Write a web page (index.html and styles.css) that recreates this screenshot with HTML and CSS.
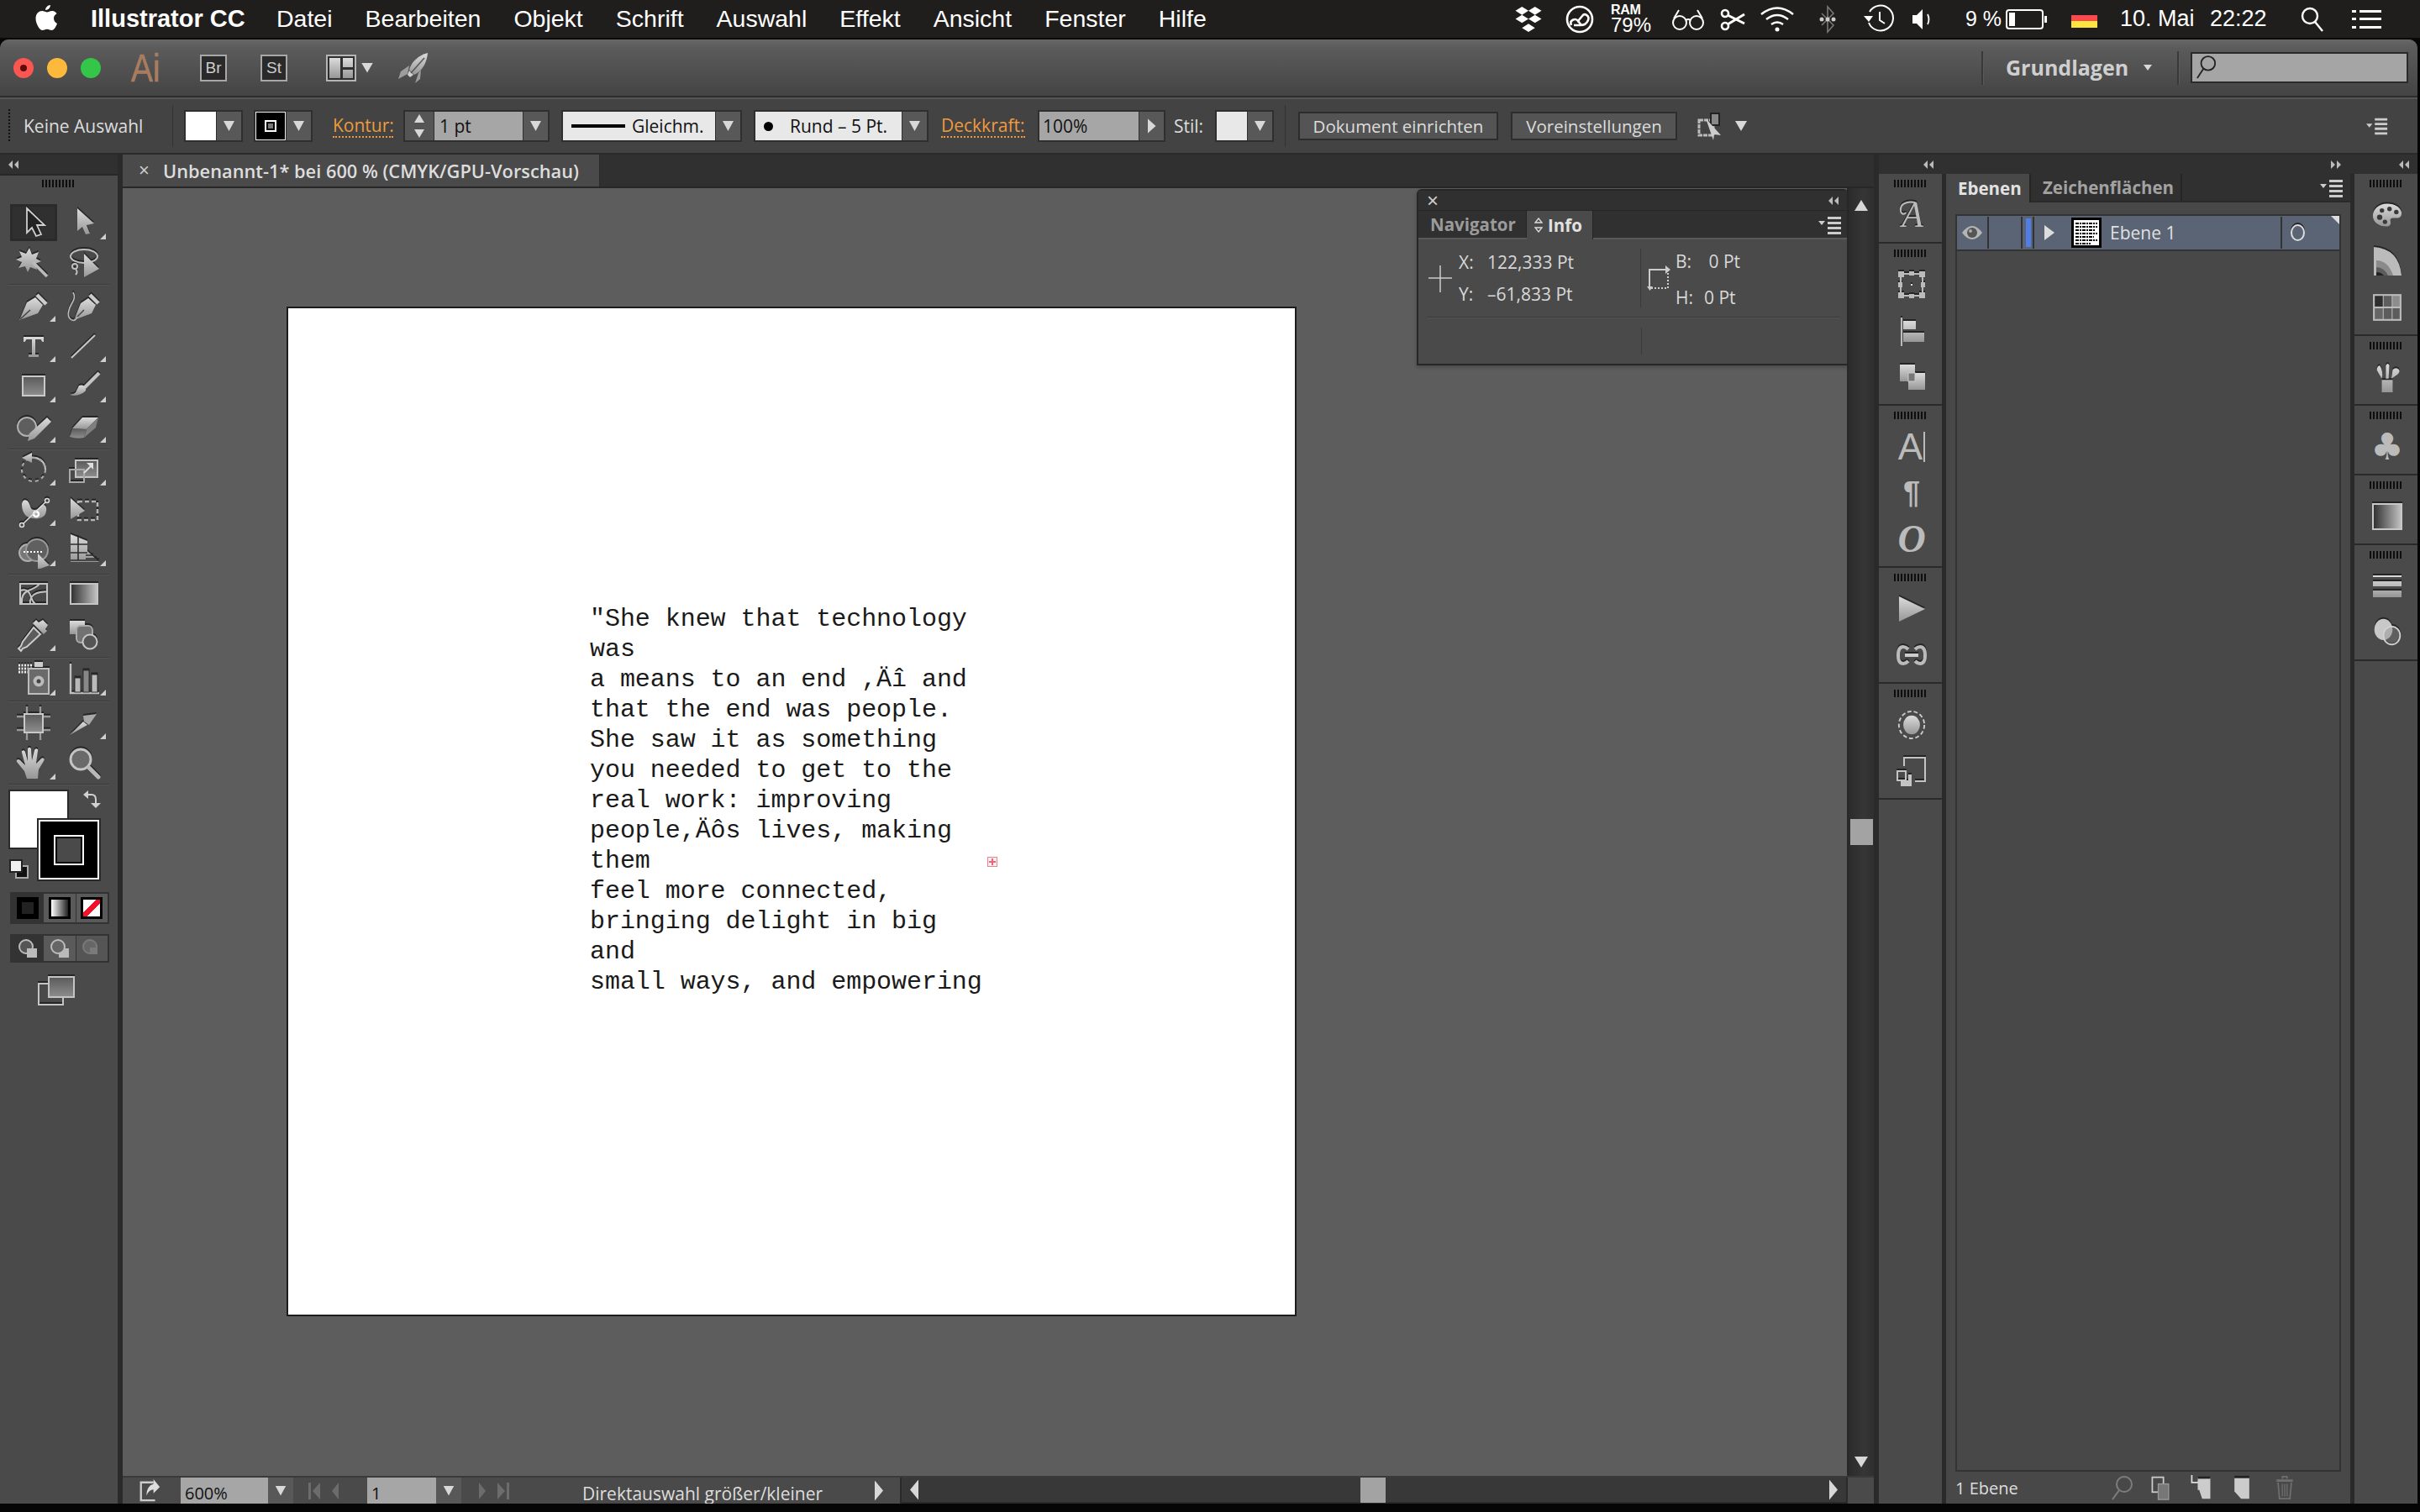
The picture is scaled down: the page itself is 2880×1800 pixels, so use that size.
FILE: index.html
```html
<!DOCTYPE html>
<html lang="de">
<head>
<meta charset="utf-8">
<title>Illustrator CC</title>
<link rel="stylesheet" href="styles.css">
</head>
<body>
<svg class="defs" width="0" height="0" aria-hidden="true">
  <defs>
    <linearGradient id="lg" x1="0" y1="0" x2="0" y2="1"><stop offset="0" stop-color="#dcdcdc"/><stop offset="1" stop-color="#969696"/></linearGradient>
    <linearGradient id="mg" x1="0" y1="0" x2="0" y2="1"><stop offset="0" stop-color="#5a5a5a"/><stop offset="1" stop-color="#8e8e8e"/></linearGradient>
    <linearGradient id="hg" x1="0" y1="0" x2="1" y2="0"><stop offset="0" stop-color="#2e2e2e"/><stop offset="1" stop-color="#c4c4c4"/></linearGradient>
    <linearGradient id="wb" x1="0" y1="0" x2="1" y2="0"><stop offset="0" stop-color="#fff"/><stop offset="1" stop-color="#333"/></linearGradient>
  </defs>
</svg>

<header class="menubar">
  <svg class="apple" viewBox="0 0 28 32"><path fill="#fff" d="M19 1c0 3-2.600 6-6 6 0-3 3-6 6-6zM23 17c0-4 3-5 3.500-6-1.700-2.500-4.500-3-5.500-3-2.500 0-4.500 1.500-6 1.500S11.500 8 9 8C5.500 8 1.500 11 1.500 17c0 6 4.500 14 8 14 1.800 0 3-1.300 5.500-1.300S18.500 31 20.500 31c3 0 5.500-5 6.500-8-2-1-4-3-4-6z"/></svg>
  <strong class="appname">Illustrator CC</strong>
  <nav class="menus">
    <span>Datei</span><span>Bearbeiten</span><span>Objekt</span><span>Schrift</span><span>Auswahl</span><span>Effekt</span><span>Ansicht</span><span>Fenster</span><span>Hilfe</span>
  </nav>
  <div class="status-items">
    <svg class="st-drop" viewBox="0 0 32 32"><path fill="#fff" d="M8 1l8 5-8 5-8-5zM24 1l8 5-8 5-8-5zM8 11l8 5-8 5-8-5zM24 11l8 5-8 5-8-5zM16 22l8 5-8 5-8-5z"/></svg>
    <svg class="st-cc" viewBox="0 0 34 34" fill="none" stroke="#fff" stroke-width="2.600"><circle cx="17" cy="17" r="15"/><path d="M7 24c-3-6 5-9 8-5l5-6c3-4 9 0 7 5s-6 6-9 6H10"/><path d="M15 19l4 5"/></svg>
    <div class="st-ram"><b>RAM</b><span>79%</span></div>
    <svg class="st-glass" viewBox="0 0 40 30" fill="none" stroke="#fff" stroke-width="2"><circle cx="10" cy="19" r="8"/><circle cx="30" cy="19" r="8"/><path d="M17 16q3-2 6 0M3 14L9 4M37 14L31 4"/></svg>
    <svg class="st-sci" viewBox="0 0 30 30" fill="none" stroke="#fff" stroke-width="2.600"><circle cx="6" cy="8" r="4"/><circle cx="6" cy="23" r="4"/><path d="M9 10l20 10M9 21L29 9" stroke-width="3"/></svg>
    <svg class="st-wifi" viewBox="0 0 42 32" fill="none" stroke="#fff" stroke-width="2.600"><path d="M2 10q19-15 38 0M8 16q13-10 26 0M14 22q7-5 14 0"/><circle cx="21" cy="28" r="2.500" fill="#fff" stroke="none"/></svg>
    <svg class="st-bt" viewBox="0 0 20 34" fill="none" stroke="#777" stroke-width="1.600"><path d="M3 10l14 14-7 8V2l7 8L3 24"/><circle cx="3" cy="17" r="2.500" fill="#ccc" stroke="none"/><circle cx="10" cy="17" r="2.500" fill="#ccc" stroke="none"/><circle cx="17" cy="17" r="2.500" fill="#ccc" stroke="none"/></svg>
    <svg class="st-tm" viewBox="0 0 36 36" fill="none" stroke="#fff" stroke-width="2"><path d="M7 9a15 15 0 1 1-1 13"/><path d="M19 9v10l6 4"/><path d="M0 14h11l-5 7z" fill="#fff" stroke="none"/></svg>
    <svg class="st-vol" viewBox="0 0 26 26"><path fill="#fff" d="M1 8h5l7-7v24l-7-7H1z"/><path fill="none" stroke="#fff" stroke-width="1.800" d="M19 7q3 6 0 12"/></svg>
    <span class="st-pct">9 %</span>
    <div class="st-batt"><i></i></div>
    <div class="st-flag"></div>
    <span class="st-date">10. Mai</span>
    <span class="st-time">22:22</span>
    <svg class="st-search" viewBox="0 0 28 30" fill="none" stroke="#fff" stroke-width="2.400"><circle cx="11" cy="11" r="9"/><path d="M17 18l9 11"/></svg>
    <svg class="st-list" viewBox="0 0 35 24" fill="#fff"><path d="M0 1h5v3H0zM9 1h26v3H9zM0 10h5v3H0zM9 10h26v3H9zM0 20h5v3H0zM9 20h26v3H9z"/></svg>
  </div>
</header>

<div class="window">
  <div class="titlebar">
    <span class="light red"><i></i></span><span class="light orange"></span><span class="light green"></span>
    <span class="ai">Ai</span>
    <span class="bridge">Br</span>
    <span class="bridge stock">St</span>
    <svg class="layout" viewBox="0 0 36 32"><rect x="1" y="1" width="34" height="30" fill="#2f2f2f" stroke="#b5b5b5" stroke-width="2"/><path fill="url(#lg)" d="M4 4h13v24H4zM20 4h12v11H20zM20 18h12v10H20z"/></svg>
    <span class="tri-d layout-arrow"></span>
    <svg class="rocket" viewBox="0 0 36 36"><path fill="url(#lg)" d="M35 0C24 3 16 10 13 20l6 6C28 22 34 12 35 0z"/><path fill="#9d9d9d" d="M13 15L3 22 0 31l11-6zM24 24l-4 12 6-5 1-11z"/><path fill="#cfcfcf" d="M13 21l5 5-4 3-3-3z"/><path fill="none" stroke="#555" stroke-width="1.500" d="M31 6L15 24"/></svg>
    <span class="vsep vs-a"></span>
    <span class="workspace">Grundlagen</span>
    <span class="tri-d ws-arrow"></span>
    <span class="vsep vs-b"></span>
    <div class="searchbox"><svg viewBox="0 0 26 32" fill="none" stroke="#222" stroke-width="2"><circle cx="15" cy="11" r="9"/><path d="M9 18L1 30"/></svg></div>
  </div>

  <div class="controlbar">
    <span class="cgrip"></span>
    <span class="cb-none">Keine Auswahl</span>
    <span class="cb-sep cs-a"></span>
    <div class="ctl c-fill"><span class="swatch white"></span><span class="dd"><i class="tri-d"></i></span></div>
    <div class="ctl c-stroke"><span class="swatch stroke"><i></i></span><span class="dd"><i class="tri-d"></i></span></div>
    <span class="link c-kontur">Kontur:</span>
    <div class="ctl c-weight"><span class="spin"><i class="tri-u"></i><i class="tri-d"></i></span><span class="field f-weight">1 pt</span><span class="dd"><i class="tri-d"></i></span></div>
    <div class="ctl c-profile"><span class="pick p-line"><i class="line"></i>Gleichm.</span><span class="dd"><i class="tri-d"></i></span></div>
    <div class="ctl c-brush"><span class="pick p-brush"><i class="dot"></i>Rund – 5 Pt.</span><span class="dd"><i class="tri-d"></i></span></div>
    <span class="link c-deck">Deckkraft:</span>
    <div class="ctl c-opac"><span class="field f-opac">100%</span><span class="dd"><i class="tri-r"></i></span></div>
    <span class="cb-stil">Stil:</span>
    <div class="ctl c-style"><span class="swatch pale"></span><span class="dd"><i class="tri-d"></i></span></div>
    <span class="cb-sep cs-b"></span>
    <button class="btn b-doc">Dokument einrichten</button>
    <button class="btn b-pref">Voreinstellungen</button>
    <svg class="cb-ico" viewBox="0 0 32 34"><rect x="2" y="10" width="17" height="18" fill="none" stroke="#bbb" stroke-width="3" stroke-dasharray="5 1"/><rect x="16" y="2" width="10" height="14" fill="#888" stroke="#222" stroke-width="2"/><path fill="#ccc" d="M10 8l18 20-8-1-1 7z"/></svg>
    <span class="tri-d cb-arrow"></span>
    <svg class="menu-ico cb-menu" viewBox="0 0 28 22"><path fill="#ccc" d="M0 8h8l-4 5zM11 1h16v3H11zM11 7h16v3H11zM11 13h16v3H11zM11 19h16v3H11z"/></svg>
  </div>

  <div class="work">
    <aside class="toolbar">
      <div class="strip"><svg class="coll" viewBox="0 0 14 12"><path fill="#bbb" d="M6 1v10L1 6zM13 1v10L8 6z"/></svg></div>
      <div class="grip tgrip"></div>
      <div class="tg g1">
        <div class="tool active"><svg class="ico" viewBox="0 0 44 44"><path fill="#222" stroke="#d0d0d0" stroke-width="1.800" d="M14 4L35 24H26L31 35 25 37 20 27 14 33Z"/></svg></div>
        <div class="tool more"><svg class="ico" viewBox="0 0 44 44"><path fill="url(#lg)" d="M14 4L34 22 25 24 29 34 24 35 20 26 14 31Z"/></svg></div>
        <div class="tool"><svg class="ico" viewBox="0 0 44 44"><path fill="url(#lg)" d="M17 3l3 8 8-3-3 8 6 3-7 3 2 7-8-3-3 6-3-7-8 2 4-7-7-3 7-3-3-7 8 3z"/><path stroke="#bbb" stroke-width="3.500" d="M21 20L38 37"/></svg></div>
        <div class="tool"><svg class="ico" viewBox="0 0 44 44"><ellipse cx="22" cy="13" rx="16" ry="8" fill="none" stroke="#c0c0c0" stroke-width="2"/><circle cx="11" cy="25" r="3" fill="none" stroke="#c0c0c0" stroke-width="2"/><path fill="none" stroke="#c0c0c0" stroke-width="2" d="M12 28q3 4 0 7"/><path fill="url(#lg)" d="M22 10l18 18-18 10z"/></svg></div>
      </div>
      <div class="tg g2">
        <div class="tool more"><svg class="ico" viewBox="0 0 44 44"><path fill="url(#lg)" d="M5 39l9-21 10-6 9 9-6 10z"/><path stroke="#444" stroke-width="1.500" d="M6 38l12-11"/><path stroke="#ccc" stroke-width="4.500" d="M26 9l11 11"/></svg></div>
        <div class="tool"><svg class="ico" viewBox="0 0 44 44"><path fill="url(#lg)" d="M10 39l8-20 9-6 9 8-5 10z"/><path stroke="#444" stroke-width="1.500" d="M11 38l11-11"/><path stroke="#ccc" stroke-width="4.500" d="M29 9l10 10"/><path fill="none" stroke="#bbb" stroke-width="1.600" d="M9 6c3 5 1 9-2 14s-6 14-1 18 7-1 8-3"/></svg></div>
        <div class="tool more"><svg class="ico" viewBox="0 0 44 44"><path fill="url(#lg)" d="M10 17v-6h24v6h-1.500l-2-3H24v18h4v3H16v-3h4V14h-6.500l-2 3z"/></svg></div>
        <div class="tool more"><svg class="ico" viewBox="0 0 44 44"><path stroke="#c8c8c8" stroke-width="2" d="M7 36L35 9"/></svg></div>
        <div class="tool more"><svg class="ico" viewBox="0 0 44 44"><rect x="9" y="10" width="26" height="23" fill="url(#mg)" stroke="#cacaca" stroke-width="2"/></svg></div>
        <div class="tool more"><svg class="ico" viewBox="0 0 44 44"><path stroke="#c4c4c4" stroke-width="4" d="M40 6L22 24"/><path fill="url(#lg)" d="M16 21c5-2 9 2 8 6-4 5-14 7-19 5 5-1 7-2 8-5z"/></svg></div>
        <div class="tool more"><svg class="ico" viewBox="0 0 44 44"><circle cx="14" cy="22" r="11" fill="#5e5e5e" stroke="#b0b0b0" stroke-width="2"/><path fill="url(#lg)" d="M38 11l5 5-20 20-8 3 2-9z"/></svg></div>
        <div class="tool more"><svg class="ico" viewBox="0 0 44 44"><path fill="url(#mg)" d="M5 34l3-10 17 1-3 10q-9 2-17-1z"/><path fill="url(#lg)" d="M8 24L20 11h19L25 25z"/><path fill="#7f7f7f" d="M25 25l14-14-3 12-14 12z"/></svg></div>
      </div>
      <div class="tg g3">
        <div class="tool more"><svg class="ico" viewBox="0 0 44 44"><path fill="none" stroke="#c0c0c0" stroke-width="2.200" d="M17 8c10-2 19 4 19 14"/><circle cx="22" cy="22" r="14" fill="none" stroke="#a8a8a8" stroke-width="2.200" stroke-dasharray="4 4"/><path fill="url(#lg)" d="M20 2v12L8 8z"/></svg></div>
        <div class="tool more"><svg class="ico" viewBox="0 0 44 44"><rect x="12" y="11" width="26" height="20" fill="url(#mg)" stroke="#c4c4c4" stroke-width="2"/><rect x="5" y="22" width="17" height="15" fill="none" stroke="#a8a8a8" stroke-width="2"/><path stroke="#ddd" stroke-width="2" d="M22 26l9-9"/><path fill="#ddd" d="M33 14v8l-8-8z"/></svg></div>
        <div class="tool more"><svg class="ico" viewBox="0 0 44 44"><path fill="url(#lg)" d="M8 16c0-7 6-7 8-3 3 5 2 9 7 9 6 0 6-5 10-6 5 0 5 6 3 11-4 7-14 6-20 4-4-2-8-7-8-15z"/><circle cx="25" cy="27" r="3" fill="none" stroke="#fff" stroke-width="2.500"/><path stroke="#ddd" stroke-width="1.500" d="M10 38l27-26"/><circle cx="38" cy="11" r="2.500" fill="#444" stroke="#ddd" stroke-width="1.500"/><circle cx="8" cy="40" r="2.500" fill="#444" stroke="#ddd" stroke-width="1.500"/></svg></div>
        <div class="tool"><svg class="ico" viewBox="0 0 44 44"><rect x="15" y="12" width="23" height="22" fill="none" stroke="#b5b5b5" stroke-width="2.500" stroke-dasharray="5 3"/><path fill="url(#lg)" d="M6 8l17 15-17 10z"/></svg></div>
        <div class="tool more"><svg class="ico" viewBox="0 0 44 44"><circle cx="15" cy="25" r="10" fill="#777" stroke="#b0b0b0" stroke-width="2"/><circle cx="26" cy="22" r="13" fill="#606060" stroke="#9a9a9a" stroke-width="2"/><path stroke="#fff" stroke-width="2" stroke-dasharray="2 2" d="M10 24h22"/><path fill="url(#lg)" d="M27 26l14 14-14 5z"/></svg></div>
        <div class="tool more"><svg class="ico" viewBox="0 0 44 44"><path fill="url(#lg)" d="M6 3l20 8v12l14 13H6z"/><path stroke="#2e2e2e" stroke-width="1.600" fill="none" d="M6 15h20M6 25h20M15 6v28M24 28h9M24 32h13M6 34h34"/></svg></div>
      </div>
      <div class="tg g4">
        <div class="tool"><svg class="ico" viewBox="0 0 44 44"><rect x="6" y="9" width="32" height="24" fill="none" stroke="#c4c4c4" stroke-width="2"/><path fill="none" stroke="#c4c4c4" stroke-width="2" d="M8 32c-1-8 3-13 8-15s11-5 13-8M18 33c-1-6 2-11 8-13s11-1 12-2M6 17c6-2 10 0 12 5s2 8 6 11"/></svg></div>
        <div class="tool"><svg class="ico" viewBox="0 0 44 44"><rect x="6" y="9" width="32" height="24" fill="url(#hg)" stroke="#c4c4c4" stroke-width="2"/></svg></div>
        <div class="tool more"><svg class="ico" viewBox="0 0 44 44"><path fill="url(#lg)" d="M28 7l5-3 6 6-3 5 2 2-4 4-13-13 4-4z"/><path fill="#5c5c5c" stroke="#ccc" stroke-width="2" d="M22 13l8 8-16 15-5 2-2 3-3-3 3-3 2-5z"/></svg></div>
        <div class="tool"><svg class="ico" viewBox="0 0 44 44"><rect x="5" y="5" width="18" height="16" fill="url(#lg)"/><rect x="13" y="11" width="19" height="20" rx="5" fill="#727272" stroke="#aaa" stroke-width="2"/><circle cx="29" cy="30" r="8.500" fill="#555" stroke="#c8c8c8" stroke-width="2"/></svg></div>
      </div>
      <div class="tg g5">
        <div class="tool more"><svg class="ico" viewBox="0 0 44 44"><path fill="none" stroke="#eee" stroke-width="3" stroke-dasharray="2 1.500" d="M4 5h16M4 9h16M4 13h16"/><rect x="23" y="1" width="10" height="6" fill="#ccc"/><rect x="16" y="9" width="24" height="30" fill="#6a6a6a" stroke="#bdbdbd" stroke-width="2"/><circle cx="28" cy="24" r="6.500" fill="#bbb"/><circle cx="28" cy="24" r="2.500" fill="#444"/></svg></div>
        <div class="tool more"><svg class="ico" viewBox="0 0 44 44"><path fill="none" stroke="#c0c0c0" stroke-width="2.400" d="M6 3v35h34"/><rect x="11" y="20" width="7" height="17" fill="#b8b8b8" stroke="#333"/><rect x="21" y="11" width="7" height="26" fill="#888" stroke="#333"/><rect x="31" y="16" width="7" height="21" fill="#bbb" stroke="#333"/></svg></div>
      </div>
      <div class="tg g6">
        <div class="tool"><svg class="ico" viewBox="0 0 44 44"><path stroke="#9a9a9a" stroke-width="2.400" d="M2 14h12M30 14h12M2 30h12M30 30h12M14 2v8M30 2v8M14 34v8M30 34v8"/><rect x="11" y="11" width="22" height="22" fill="url(#mg)" stroke="#c8c8c8" stroke-width="2"/></svg></div>
        <div class="tool more"><svg class="ico" viewBox="0 0 44 44"><path fill="url(#lg)" d="M5 36l16-16 5 4z"/><path fill="#a8a8a8" d="M21 13l16-2-9 13-6-4z"/></svg></div>
        <div class="tool more"><svg class="ico" viewBox="0 0 44 44"><path fill="url(#lg)" d="M14 40l-3-9-9-11c-1-3 2-4 4-2l6 6-4-15c-1-3 3-4 4-1l3 11V5c0-3 4-3 4 0l1 13 3-12c1-3 5-2 4 1l-2 15 6-6c2-2 5 0 3 3l-6 10-1 11z"/></svg></div>
        <div class="tool"><svg class="ico" viewBox="0 0 44 44"><circle cx="18" cy="17" r="12" fill="#6a6a6a" stroke="#c4c4c4" stroke-width="3"/><path stroke="#b8b8b8" stroke-width="5" stroke-linecap="round" d="M28 27l11 11"/></svg></div>
      </div>
      <div class="colors">
        <div class="fillbox"></div>
        <div class="strokebox"><i></i></div>
        <svg class="swap" viewBox="0 0 22 24"><path fill="none" stroke="#d0d0d0" stroke-width="2" d="M5 6h6q5 0 5 6v5"/><path fill="#d0d0d0" d="M7 1v10L1 6zM10 16h12l-6 6z"/></svg>
        <div class="defaultbox"><i></i><b></b></div>
      </div>
      <div class="modes colormodes">
        <span class="mode on"><i class="cm-solid"></i></span>
        <span class="mode"><i class="cm-grad"></i></span>
        <span class="mode"><i class="cm-none"></i></span>
      </div>
      <div class="modes drawmodes">
        <span class="mode on"><svg viewBox="0 0 24 24"><circle cx="10" cy="10" r="8" fill="#555" stroke="#bbb" stroke-width="2"/><rect x="11" y="12" width="12" height="11" fill="#bbb"/></svg></span>
        <span class="mode"><svg viewBox="0 0 24 24"><rect x="11" y="12" width="12" height="11" fill="#bbb"/><circle cx="10" cy="10" r="8" fill="#666" stroke="#bbb" stroke-width="2"/></svg></span>
        <span class="mode dim"><svg viewBox="0 0 24 24"><circle cx="10" cy="10" r="8" fill="#666" stroke="#7a7a7a" stroke-width="2"/><rect x="10" y="11" width="9" height="8" fill="#7a7a7a"/></svg></span>
      </div>
      <svg class="screenmode ico" viewBox="0 0 44 36"><rect x="1" y="10" width="29" height="25" fill="none" stroke="#c4c4c4" stroke-width="2"/><rect x="13" y="2" width="30" height="24" fill="url(#mg)" stroke="#c4c4c4" stroke-width="2"/></svg>
    </aside>

    <main class="doc">
      <div class="tabs">
        <div class="tab"><span class="tab-x">×</span><span class="tab-name">Unbenannt-1* bei 600 % (CMYK/GPU-Vorschau)</span></div>
      </div>
      <div class="stage">
        <div class="canvas">
          <div class="artboard">
            <pre class="copy">"She knew that technology
was
a means to an end ,Äî and
that the end was people.
She saw it as something
you needed to get to the
real work: improving
people,Äôs lives, making
them
feel more connected,
bringing delight in big
and
small ways, and empowering</pre>
            <span class="overflow"></span>
          </div>

          <section class="infopanel">
            <div class="ip-head"><span class="ip-x">×</span><svg class="coll" viewBox="0 0 14 12"><path fill="#bbb" d="M6 1v10L1 6zM13 1v10L8 6z"/></svg></div>
            <div class="ip-tabs">
              <span class="ip-tab">Navigator</span>
              <span class="ip-tab on"><svg viewBox="0 0 10 18"><path fill="none" stroke="#ddd" stroke-width="1.300" d="M5 1l4 5H1zM5 17l4-5H1z"/></svg>Info</span>
              <svg class="menu-ico ip-menu" viewBox="0 0 28 22"><path fill="#ccc" d="M0 6h8l-4 5zM11 1h16v3H11zM11 7h16v3H11zM11 13h16v3H11zM11 19h16v3H11z"/></svg>
            </div>
            <div class="ip-body">
              <div class="ip-row">
                <div class="ip-cell ip-left">
                  <svg class="ip-cross" viewBox="0 0 28 34"><path stroke="#ccc" stroke-width="1.500" d="M0 17h28M14 2v32"/></svg>
                  <div class="ip-vals"><p><span class="k">X:</span>122,333 Pt</p><p><span class="k">Y:</span>–61,833 Pt</p></div>
                </div>
                <div class="ip-cell ip-right">
                  <svg class="ip-box" viewBox="0 0 28 32"><path fill="none" stroke="#ccc" stroke-width="2" d="M3 26V6h22"/><path fill="none" stroke="#ccc" stroke-width="2" stroke-dasharray="2 2" d="M25 6v22H3"/><path fill="#ccc" d="M22 1l6 5-6 5zM0 26h7l-3.500 5z"/></svg>
                  <div class="ip-vals wide"><p><span class="k">B:</span>&nbsp;0 Pt</p><p><span class="k">H:</span>0 Pt</p></div>
                </div>
              </div>
              <div class="ip-hr"></div>
              <div class="ip-row2"><span></span></div>
            </div>
          </section>
        </div>
        <div class="vscroll">
          <i class="tri-u sc-up"></i>
          <span class="thumb"></span>
          <i class="tri-d sc-dn"></i>
        </div>
      </div>
      <div class="statusbar">
        <div class="sb-left">
          <svg class="sb-share" viewBox="0 0 26 30"><path fill="none" stroke="#ccc" stroke-width="2.500" d="M18 4H2v23h18"/><path fill="#ddd" d="M18 0l8 10-8 8v-5q-6 0-9 8 0-12 9-15z"/></svg>
          <span class="field sb-zoom">600%</span><span class="dd sb-dd"><i class="tri-d"></i></span>
          <span class="sb-nav"><svg viewBox="0 0 16 24"><path fill="#6c6c6c" d="M1 2h3v20H1zM15 2v20L6 12z"/></svg><svg viewBox="0 0 10 24"><path fill="#6c6c6c" d="M9 2v20L1 12z"/></svg></span>
          <span class="field sb-page">1</span><span class="dd sb-dd"><i class="tri-d"></i></span>
          <span class="sb-nav sb-nav2"><svg viewBox="0 0 10 24"><path fill="#6c6c6c" d="M1 2v20l8-10z"/></svg><svg viewBox="0 0 16 24"><path fill="#6c6c6c" d="M1 2v20l9-10zM12 2h3v20h-3z"/></svg></span>
          <span class="sb-text">Direktauswahl größer/kleiner</span>
          <i class="tri-r sb-more"></i>
        </div>
        <div class="hscroll"><i class="tri-l"></i><span class="hthumb"></span><i class="tri-r"></i></div>
        <div class="sb-corner"></div>
      </div>
    </main>

    <div class="docks">
      <div class="docks-strip">
        <svg class="coll cl-a" viewBox="0 0 14 12"><path fill="#bbb" d="M6 1v10L1 6zM13 1v10L8 6z"/></svg>
        <svg class="coll cl-b" viewBox="0 0 14 12"><path fill="#bbb" d="M1 1v10l5-5zM8 1v10l5-5z"/></svg>
        <svg class="coll cl-c" viewBox="0 0 14 12"><path fill="#bbb" d="M6 1v10L1 6zM13 1v10L8 6z"/></svg>
      </div>
      <div class="docks-body">
        <div class="dock">
          <div class="dgroup"><div class="grip"></div><div class="dicon"><svg class="ico" viewBox="0 0 36 36"><text x="19" y="32" text-anchor="middle" class="script-a">A</text><path fill="none" stroke="#bbb" stroke-width="2" d="M24 4C16 1 6 3 5 10s4 8 6 5"/></svg></div></div>
          <div class="dgroup">
            <div class="grip"></div>
            <div class="dicon"><svg class="ico" viewBox="0 0 36 36"><rect x="5" y="5" width="26" height="26" fill="none" stroke="#bbb" stroke-width="2"/><path fill="#bbb" d="M2 2h7v7H2zM15 2h6v5h-6zM27 2h7v7h-7zM2 15h5v6H2zM29 15h5v6h-5zM2 27h7v7H2zM15 29h6v5h-6zM27 27h7v7h-7z"/><rect x="17" y="17" width="2" height="2" fill="#ddd"/></svg></div>
            <div class="dicon"><svg class="ico" viewBox="0 0 36 36"><path fill="#bbb" d="M5 2h2v34H5z"/><path fill="url(#lg)" d="M8 6h15v10H8zM8 20h25v11H8z"/></svg></div>
            <div class="dicon"><svg class="ico" viewBox="0 0 36 36"><path fill="url(#lg)" d="M4 3h18v20H4z"/><path fill="url(#lg)" d="M14 13h20v20H14z"/><rect x="14" y="13" width="8" height="10" fill="#777" stroke="#ccc"/></svg></div>
          </div>
          <div class="dgroup">
            <div class="grip"></div>
            <div class="dicon"><span class="gly g-a">A</span></div>
            <div class="dicon"><span class="gly g-p">¶</span></div>
            <div class="dicon"><span class="gly g-o">O</span></div>
          </div>
          <div class="dgroup">
            <div class="grip"></div>
            <div class="dicon"><svg class="ico" viewBox="0 0 36 36"><path fill="url(#lg)" d="M3 3l31 15L3 33z"/></svg></div>
            <div class="dicon"><svg class="ico" viewBox="0 0 36 36"><path fill="none" stroke="#bbb" stroke-width="4" d="M14 11q-3-3-6-3-6 0-6 10t6 10q3 0 6-3M22 11q3-3 6-3 6 0 6 10t-6 10q-3 0-6-3"/><rect x="10" y="16" width="16" height="4" fill="#ccc"/></svg></div>
          </div>
          <div class="dgroup">
            <div class="grip"></div>
            <div class="dicon"><svg viewBox="0 0 36 38"><ellipse cx="18" cy="19" rx="16" ry="17" fill="none" stroke="#ccc" stroke-width="2" stroke-dasharray="5 3"/><ellipse cx="18" cy="19" rx="10.500" ry="12" fill="url(#lg)"/></svg></div>
            <div class="dicon"><svg class="ico" viewBox="0 0 36 36"><path fill="none" stroke="#c4c4c4" stroke-width="2" d="M9 12V2h25v28H22"/><rect x="1" y="18" width="10" height="11" fill="none" stroke="#c4c4c4" stroke-width="2"/><path fill="#c4c4c4" d="M5 29h9v-7h4v14H5z"/></svg></div>
          </div>
          <div class="dfill"></div>
        </div>

        <section class="layers">
          <div class="l-tabs">
            <span class="l-tab on">Ebenen</span>
            <span class="l-tab">Zeichenflächen</span>
            <svg class="menu-ico l-menu" viewBox="0 0 28 22"><path fill="#ccc" d="M0 6h8l-4 5zM11 1h16v3H11zM11 7h16v3H11zM11 13h16v3H11zM11 19h16v3H11z"/></svg>
          </div>
          <div class="l-list">
            <div class="l-row">
              <span class="l-eye"><svg viewBox="0 0 26 20"><path fill="#b5b5b5" d="M1 10q12-16 24 0-12 16-24 0z"/><circle cx="13" cy="10" r="6" fill="#555"/><circle cx="11" cy="8" r="2" fill="#aaa"/></svg></span>
              <span class="l-lock"></span>
              <span class="l-color"><i></i></span>
              <i class="tri-r l-exp"></i>
              <svg class="l-thumb" viewBox="0 0 36 36"><rect width="36" height="36" fill="#000"/><rect x="3" y="3" width="30" height="30" fill="#fff"/><path fill="none" stroke="#000" stroke-width="2" stroke-dasharray="4 1 2 1" d="M5 7h26M5 11h26M5 15h24M5 19h26M5 23h22M5 27h26M5 31h18"/></svg>
              <span class="l-name">Ebene 1</span>
              <span class="l-target"><i></i></span>
              <span class="l-corner"></span>
            </div>
          </div>
          <div class="l-foot">
            <span class="l-count">1 Ebene</span>
            <div class="l-actions">
              <svg class="lf-a" viewBox="0 0 26 30" fill="none" stroke="#7d7d7d" stroke-width="2"><circle cx="15" cy="11" r="9"/><path d="M9 18L1 29"/></svg>
              <svg class="lf-b" viewBox="0 0 26 34"><rect x="1" y="3" width="15" height="20" fill="none" stroke="#ccc" stroke-width="2"/><rect x="9" y="12" width="14" height="21" fill="#777" stroke="#999" stroke-width="1.500"/></svg>
              <svg class="lf-c" viewBox="0 0 28 34"><path fill="#ccc" d="M10 3h17v29H16l-4-12h-2z"/><path fill="#222" d="M10 2h17v3H10z"/><path stroke="#ddd" stroke-width="2" fill="none" d="M2 0v10h9"/></svg>
              <svg class="lf-d" viewBox="0 0 22 34"><path fill="#ccc" d="M1 4h20v28H10L1 22z"/><path fill="#222" d="M1 1h20v3H1z"/></svg>
              <svg class="lf-e" viewBox="0 0 24 34"><path fill="none" stroke="#6f6f6f" stroke-width="2" d="M9 5V2h6v3M3 10l2 22h14l2-22"/><path fill="#6f6f6f" d="M1 6h22v3H1zM8 12h1.500v17H8zM11.300 12h1.500v17h-1.500zM14.500 12H16v17h-1.500z"/></svg>
            </div>
          </div>
        </section>

        <div class="dock dock-r">
          <div class="dgroup">
            <div class="grip"></div>
            <div class="dicon"><svg class="ico" viewBox="0 0 40 36"><path fill="url(#lg)" d="M20 3C8 3 1 11 1 19s8 14 18 14c6 0 6-5 5-8 0-4 5-3 9-3 5 0 6-4 6-7C38 8 30 3 20 3z"/><g fill="#3a3a3a"><circle cx="10" cy="21" r="3.500"/><circle cx="13" cy="12" r="3"/><circle cx="23" cy="10" r="3"/><circle cx="32" cy="14" r="3"/><circle cx="17" cy="27" r="3"/></g></svg></div>
            <div class="dicon"><svg class="ico" viewBox="0 0 36 36"><path fill="#bbb" d="M2 1q30 2 33 34H2z"/><path fill="#8a8a8a" d="M5 17q14 0 20 18H5z"/><path fill="#5c5c5c" d="M5 25q9 0 14 10H5z"/><path fill="#222" d="M5 31q6 0 9 4H5z"/></svg></div>
            <div class="dicon"><svg viewBox="0 0 34 32"><rect x="1" y="1" width="32" height="30" fill="#bbb"/><path fill="#2e2e2e" d="M3 3h9v12H3z"/><path fill="#5e5e5e" d="M13 3h9v12h-9z"/><path fill="#8d8d8d" d="M23 3h8v12h-8z"/><path fill="#666" d="M3 17h9v12H3z"/><path fill="#5c5c5c" d="M13 17h9v12h-9zM23 17h8v12h-8z"/></svg></div>
          </div>
          <div class="dgroup">
            <div class="grip"></div>
            <div class="dicon"><svg class="ico" viewBox="0 0 36 44"><path fill="url(#lg)" d="M10 26h16v18H10zM16 24V5q3-5 5 0l-1 19zM10 24L3 12q0-6 4-7 4 6 4 14zM24 24l2-13q4-4 8-1t-1 8z"/></svg></div>
          </div>
          <div class="dgroup">
            <div class="grip"></div>
            <div class="dicon"><span class="gly g-c">♣</span></div>
          </div>
          <div class="dgroup">
            <div class="grip"></div>
            <div class="dicon"><svg class="ico" viewBox="0 0 36 32"><rect x="1" y="1" width="34" height="30" fill="url(#hg)" stroke="#c8c8c8" stroke-width="2"/></svg></div>
          </div>
          <div class="dgroup">
            <div class="grip"></div>
            <div class="dicon"><svg class="ico" viewBox="0 0 36 32"><path fill="url(#lg)" d="M1 3h34v2H1zM1 10h34v6H1zM1 21h34v8H1z"/></svg></div>
            <div class="dicon"><svg class="ico" viewBox="0 0 36 40"><ellipse cx="13" cy="16" rx="12" ry="14" fill="#c8c8c8"/><ellipse cx="24" cy="24" rx="11" ry="12" fill="#8d8d8d" fill-opacity=".45" stroke="#d2d2d2" stroke-width="2"/></svg></div>
          </div>
          <div class="dfill"></div>
        </div>
      </div>
    </div>
  </div>
</div>
</body>
</html>
```

FILE: styles.css
```css
* { box-sizing: border-box; }
html, body { margin: 0; padding: 0; }
body { width: 2880px; height: 1800px; background: #050505; overflow: hidden; font-family: "Open Sans", "Liberation Sans", sans-serif; color: #ddd; }
.defs { position: absolute; }
i { display: block; }
p { margin: 0; }

/* triangles */
.tri-d, .tri-u, .tri-r, .tri-l { display: block; flex: none; background: #d8d8d8; }
.tri-d { width: 14px; height: 12px; clip-path: polygon(0 0, 100% 0, 50% 100%); }
.tri-u { width: 14px; height: 12px; clip-path: polygon(50% 0, 100% 100%, 0 100%); }
.tri-r { width: 10px; height: 22px; clip-path: polygon(0 0, 100% 50%, 0 100%); }
.tri-l { width: 10px; height: 22px; clip-path: polygon(100% 0, 100% 100%, 0 50%); }

/* menu bar */
.menubar { height: 47px; background: #1f1e1c; border-bottom: 2px solid #0a0a0a; display: flex; align-items: center; color: #fff; font-family: "Liberation Sans", Arial, sans-serif; font-size: 28.500px; }
.apple { width: 28px; height: 32px; margin-left: 41px; margin-bottom: 3px; flex: none; }
.appname { margin-left: 39px; width: 184px; flex: none; font-size: 29px; white-space: nowrap; }
.menus { display: flex; gap: 39px; margin-left: 37px; }
.status-items { margin-left: auto; display: flex; align-items: center; width: 1077px; }
.status-items svg { flex: none; display: block; }
.st-drop { width: 32px; height: 31px; }
.st-cc { width: 34px; height: 34px; margin-left: 28px; }
.st-ram { margin-left: 20px; width: 49px; display: flex; flex-direction: column; line-height: 1; }
.st-ram b { font-size: 16px; letter-spacing: -0.300px; line-height: 15px; }
.st-ram span { font-size: 24px; line-height: 22px; }
.st-glass { width: 40px; height: 30px; margin-left: 23px; }
.st-sci { width: 30px; height: 30px; margin-left: 18px; }
.st-wifi { width: 42px; height: 32px; margin-left: 17px; }
.st-bt { width: 20px; height: 34px; margin-left: 29px; }
.st-tm { width: 36px; height: 36px; margin-left: 33px; }
.st-vol { width: 26px; height: 26px; margin-left: 21px; }
.st-pct { margin-left: 38px; width: 40px; font-size: 25px; white-space: nowrap; }
.st-batt { margin-left: 8px; width: 45px; height: 24px; border: 2px solid #fff; border-radius: 4px; position: relative; padding: 2px; }
.st-batt i { width: 7px; height: 16px; background: #fff; }
.st-batt::after { content: ""; position: absolute; right: -6px; top: 6px; width: 3px; height: 8px; background: #fff; }
.st-flag { margin-left: 33px; width: 31px; height: 15px; background: linear-gradient(#fb4a4d 0 50%, #fde43f 50%); margin-top: 6px; }
.st-date { margin-left: 27px; width: 89px; white-space: nowrap; font-size: 27px; }
.st-time { margin-left: 18px; width: 72px; font-size: 27px; }
.st-search { width: 28px; height: 30px; margin-left: 36px; }
.st-list { width: 35px; height: 24px; margin-left: 33px; }

/* window */
.window { height: 1743px; border-radius: 10px 10px 0 0; overflow: hidden; margin: 0 3px 0 0; background: #2a2a2a; }
.titlebar { height: 69px; background: linear-gradient(#676767, #5b5b5b 15%, #444); display: flex; align-items: center; border-bottom: 2px solid #2d2d2d; }
.light { width: 24px; height: 24px; border-radius: 50%; flex: none; margin-left: 16px; display: flex; align-items: center; justify-content: center; }
.red { background: #fb5652; }
.red i { width: 8px; height: 8px; border-radius: 50%; background: #5a0d0b; }
.orange { background: #fcb93c; }
.green { background: #34c648; }
.ai { margin-left: 36px; width: 36px; color: #a97c60; font-size: 46px; font-family: "Liberation Sans", sans-serif; line-height: 1; flex: none; transform: scaleX(.85); transform-origin: left center; white-space: nowrap; -webkit-text-stroke: .6px #a97c60; }
.bridge { margin-left: 46px; width: 32px; height: 32px; background: #2a2a2a; border: 2px solid #a8a8a8; color: #ccc; font-size: 19px; font-family: "Liberation Sans", sans-serif; display: flex; align-items: center; justify-content: center; flex: none; }
.stock { margin-left: 40px; }
.layout { width: 36px; height: 32px; margin-left: 46px; flex: none; }
.layout-arrow { margin-left: 6px; }
.rocket { width: 36px; height: 36px; margin-left: 30px; flex: none; }
.vsep { width: 2px; height: 40px; background: #393939; box-shadow: 1px 0 0 #5a5a5a; flex: none; }
.vs-a { margin-left: auto; }
.workspace { margin-left: 27px; width: 144px; font-size: 25px; font-weight: 700; color: #cfcfcf; white-space: nowrap; margin-bottom: 2px; }
.ws-arrow { width: 10px; height: 7px; margin-left: 20px; }
.vs-b { margin-left: 30px; }
.searchbox { margin-left: 14px; margin-right: 11px; width: 259px; height: 37px; background: #a5a5a5; border: 2px solid #2a2a2a; padding-left: 5px; flex: none; }
.searchbox svg { width: 24px; height: 32px; display: block; }

/* control bar */
.controlbar { height: 68px; background: #434343; border-top: 2px solid #555; border-bottom: 2px solid #2a2a2a; display: flex; align-items: center; font-size: 21px; }
.cgrip { width: 2px; height: 40px; margin-left: 10px; background: repeating-linear-gradient(#111 0 2px, transparent 2px 4px); flex: none; }
.cb-none { margin-left: 16px; width: 177px; white-space: nowrap; color: #ddd; }
.cb-sep { width: 1px; height: 50px; background: #333; flex: none; }
.ctl { display: flex; height: 38px; background: #2f2f2f; padding: 2px; flex: none; gap: 1px; }
.swatch { width: 36px; height: 34px; flex: none; display: block; }
.swatch.white { background: #fff; }
.swatch.pale { background: #e8e8e8; }
.swatch.stroke { background: #000; display: flex; align-items: center; justify-content: center; border: 1px solid #eee; }
.swatch.stroke i { width: 14px; height: 14px; border: 2px solid #fff; box-shadow: inset 0 0 0 2px #000; background: #777; }
.dd { width: 29px; height: 34px; background: #585858; display: flex; align-items: center; justify-content: center; flex: none; }
.dd .tri-d { width: 13px; height: 12px; }
.dd .tri-r { width: 10px; height: 18px; }
.c-fill { margin-left: 13px; }
.c-stroke { margin-left: 13px; }
.link { color: #ee9a3e; border-bottom: 2px dotted #ee9a3e; line-height: 26px; white-space: nowrap; flex: none; }
.c-kontur { margin-left: 24px; width: 72px; }
.c-weight { margin-left: 12px; }
.spin { width: 34px; background: #555; display: flex; flex-direction: column; align-items: center; justify-content: space-between; padding: 3px 0; flex: none; }
.spin .tri-u, .spin .tri-d { width: 12px; height: 10px; }
.field { background: #a6a6a6; color: #111; display: flex; align-items: center; padding-left: 6px; flex: none; white-space: nowrap; font-size: 21px; }
.f-weight { width: 105px; }
.c-profile { margin-left: 14px; }
.c-brush { margin-left: 14px; }
.pick { background: #e8e8e8; color: #111; display: flex; align-items: center; flex: none; font-size: 21px; white-space: nowrap; }
.p-line { width: 181px; padding-left: 10px; }
.p-line .line { width: 64px; height: 4px; background: #000; margin-right: 8px; }
.p-brush { width: 174px; padding-left: 10px; }
.p-brush .dot { width: 11px; height: 11px; background: #000; border-radius: 50%; margin-right: 20px; }
.c-deck { margin-left: 15px; width: 100px; }
.c-opac { margin-left: 15px; }
.f-opac { width: 118px; padding-left: 4px; }
.cb-stil { margin-left: 10px; width: 36px; flex: none; }
.c-style { margin-left: 13px; }
.cs-b { margin-left: 13px; }
.btn { height: 34px; background: #545454; border: 2px solid #2d2d2d; color: #ddd; font: inherit; font-size: 20.500px; padding: 0; flex: none; white-space: nowrap; }
.b-doc { width: 238px; margin-left: 15px; }
.b-pref { width: 198px; margin-left: 15px; }
.cb-ico { width: 32px; height: 34px; margin-left: 24px; flex: none; }
.cb-arrow { margin-left: 13px; }
.cb-menu { margin-left: auto; margin-right: 35px; width: 26px; height: 22px; flex: none; }
.menu-ico { display: block; flex: none; }

/* work area */
.work { display: flex; height: 1606px; background: #2a2a2a; }
.coll { width: 14px; height: 12px; display: block; flex: none; }

/* toolbar */
.toolbar { width: 140px; flex: none; background: #4a4a4a; margin-right: 6px; }
.strip { height: 25px; background: #303030; border-bottom: 2px solid #272727; padding: 6px 0 0 9px; }
.grip { width: 38px; height: 9px; background: repeating-linear-gradient(90deg, #0e0e0e 0 2px, transparent 2px 4px); }
.tgrip { margin: 5px 0 0 50px; }
.tg { display: grid; grid-template-columns: 60px 60px; margin-left: 10px; width: 120px; border-bottom: 1px solid #3b3b3b; box-shadow: 0 1px 0 #555; }
.g1 { margin-top: 19px; }
.g2 { padding-top: 1px; padding-bottom: 2px; }
.g3 { padding-bottom: 4px; }
.g4 { padding-bottom: 2px; }
.g5 { padding-top: 2px; padding-bottom: 1px; }
.g6 { padding-top: 2px; }
.tool { height: 48px; display: flex; align-items: center; justify-content: center; position: relative; }
.tool svg { width: 44px; height: 44px; display: block; }
.ico { filter: drop-shadow(0 -1.500px 0 #252525); }
.tool.more::after { content: ""; position: absolute; right: 4px; bottom: 5px; width: 7px; height: 7px; background: #cfcfcf; clip-path: polygon(100% 0, 100% 100%, 0 100%); }
.tool.active::before { content: ""; position: absolute; left: 2px; right: 2px; top: 1px; bottom: 3px; background: #303030; border: 3px solid #2b2b2b; }
.tool.active svg { position: relative; }

.colors { position: relative; height: 122px; }
.fillbox { position: absolute; left: 10px; top: 6px; width: 72px; height: 71px; background: #fff; border: 2px solid #2a2a2a; }
.strokebox { position: absolute; left: 46px; top: 42px; width: 72px; height: 71px; background: #000; border: 2px solid #fff; outline: 2px solid #2a2a2a; display: flex; align-items: center; justify-content: center; }
.strokebox i { width: 36px; height: 36px; background: #4a4a4a; border: 2px solid #fff; box-shadow: inset 0 0 0 2px #000; }
.swap { position: absolute; left: 98px; top: 6px; width: 22px; height: 24px; }
.defaultbox { position: absolute; left: 10px; top: 88px; width: 25px; height: 26px; }
.defaultbox b { position: absolute; left: 8px; top: 8px; width: 16px; height: 16px; background: #111; border: 2px solid #aaa; }
.defaultbox i { position: absolute; left: 1px; top: 1px; width: 16px; height: 16px; background: #eee; border: 2px solid #222; z-index: 1; }

.modes { display: flex; margin: 6px 0 0 12px; width: 118px; background: #333; padding: 2px; gap: 1px; }
.colormodes { height: 38px; margin-top: 6px; }
.drawmodes { height: 34px; margin-top: 12px; }
.mode { flex: 1; background: #5a5a5a; display: flex; align-items: center; justify-content: center; }
.mode.on { background: #333; }
.mode.dim { background: #555; }
.mode svg { width: 24px; height: 24px; display: block; }
.cm-solid, .cm-grad, .cm-none { width: 26px; height: 26px; border: 3px solid #000; }
.cm-solid { background: #222; border-width: 6px; }
.cm-grad { background: linear-gradient(90deg, #fff, #222); }
.cm-none { background: linear-gradient(135deg, #fff 0 38%, #f4112b 38% 62%, #fff 62%); }
.screenmode { width: 44px; height: 36px; display: block; margin: 15px 0 0 45px; }

/* document */
.doc { flex: 1; min-width: 0; display: flex; flex-direction: column; }
.tabs { height: 40px; background: #303030; border-bottom: 2px solid #272727; display: flex; flex: none; }
.tab { width: 568px; background: #4a4a4a; border-right: 1px solid #2a2a2a; display: flex; align-items: center; padding-left: 19px; }
.tab-x { font-size: 22px; color: #ccc; width: 29px; font-family: "Liberation Sans", sans-serif; }
.tab-name { font-size: 21.800px; font-weight: 600; color: #ddd; white-space: nowrap; }
.stage { flex: 1; display: flex; min-height: 0; }
.canvas { flex: 1; min-width: 0; background: #5d5d5d; position: relative; padding: 143px 0 0 197px; }
.artboard { width: 1198px; height: 1198px; background: #fff; box-shadow: 0 0 0 2px #1c1c1c; position: relative; padding: 352px 0 0 359px; }
.copy { margin: 0; font-family: "Liberation Mono", "Courier New", monospace; font-size: 30px; line-height: 36px; color: #1a1a1a; letter-spacing: -.05px; }
.overflow { position: absolute; left: 832px; top: 653px; width: 12px; height: 12px; border: 1px solid #f0808c; background: linear-gradient(#e8657a, #e8657a) center/8px 2px no-repeat, linear-gradient(#e8657a, #e8657a) center/2px 8px no-repeat, #fdeef0; }

.infopanel { position: absolute; left: 1540px; top: 1px; width: 514px; height: 210px; background: #4a4a4a; border: 2px solid #272727; border-radius: 6px 6px 0 0; box-shadow: 0 2px 4px rgba(0,0,0,.25); }
.ip-head { height: 24px; background: #303030; display: flex; align-items: center; justify-content: space-between; padding: 0 9px 0 10px; border-bottom: 1px solid #262626; }
.ip-x { font-size: 24px; color: #ccc; font-family: "Liberation Sans", sans-serif; line-height: 1; }
.ip-tabs { height: 34px; background: #303030; display: flex; align-items: stretch; border-bottom: 2px solid #5a5a5a; position: relative; font-size: 20.500px; font-weight: 700; }
.ip-tab { display: flex; align-items: center; color: #9b9b9b; padding: 0 14px; width: 129px; border-right: 1px solid #252525; white-space: nowrap; }
.ip-tab.on { width: 79px; background: #4a4a4a; color: #e2e2e2; padding: 0 0 0 9px; gap: 6px; margin-bottom: -2px; }
.ip-tab svg { width: 10px; height: 18px; flex: none; }
.ip-menu { width: 28px; height: 22px; margin: 6px 6px 0 auto; }
.ip-body { font-size: 21px; color: #d8d8d8; }
.ip-row { display: flex; height: 92px; padding-top: 11px; }
.ip-cell { display: flex; align-items: center; height: 70px; }
.ip-left { width: 265px; border-right: 1px solid #3a3a3a; padding-left: 12px; }
.ip-right { padding-left: 5px; }
.ip-cross { width: 28px; height: 34px; flex: none; }
.ip-box { width: 28px; height: 32px; flex: none; margin-left: 2px; }
.ip-vals { margin-left: 8px; display: flex; flex-direction: column; gap: 12px; line-height: 26px; white-space: nowrap; }
.ip-vals.wide { margin-left: 6px; gap: 17px; padding-top: 2px; }
.ip-vals .k { display: inline-block; width: 34px; }
.ip-hr { height: 1px; background: #3a3a3a; box-shadow: 0 1px 0 #555; margin: 0 8px 0 10px; }
.ip-row2 { padding: 12px 0 0 265px; }
.ip-row2 span { display: block; width: 1px; height: 32px; background: #3a3a3a; }

.vscroll { width: 31px; flex: none; background: linear-gradient(90deg, #2b2b2b, #363636 60%, #2f2f2f); margin-left: 1px; border-left: 1px solid #272727; display: flex; flex-direction: column; align-items: center; position: relative; }
.vscroll .tri-u, .vscroll .tri-d { width: 16px; height: 13px; }
.sc-up { margin-top: 14px; }
.thumb { width: 27px; height: 31px; background: #a3a3a3; margin-top: 724px; }
.sc-dn { margin-top: auto; margin-bottom: 10px; }

.statusbar { height: 33px; flex: none; display: flex; background: #4a4a4a; border-top: 2px solid #3a3a3a; }
.sb-left { width: 925px; display: flex; align-items: center; flex: none; font-size: 21px; }
.sb-share { width: 26px; height: 28px; margin-left: 19px; flex: none; }
.sb-zoom { margin-left: 24px; width: 104px; height: 31px; padding-left: 5px; padding-top: 8px; line-height: 22px; font-size: 20px; align-items: flex-start; }
.sb-dd { width: 30px; height: 31px; }
.sb-nav { display: flex; gap: 12px; margin-left: 17px; width: 71px; flex: none; }
.sb-nav svg:first-child { width: 16px; height: 24px; }
.sb-nav svg:last-child { width: 10px; height: 24px; }
.sb-nav2 svg:first-child { width: 10px; }
.sb-nav2 svg:last-child { width: 16px; }
.sb-nav2 { margin-left: 20px; width: 62px; }
.sb-page { margin-left: 0; width: 82px; height: 31px; padding-left: 5px; padding-top: 8px; line-height: 22px; font-size: 20px; align-items: flex-start; }
.sb-text { margin-left: 62px; width: 330px; color: #ddd; white-space: nowrap; padding-top: 6px; line-height: 24px; }
.sb-more { width: 10px; height: 24px; margin-left: 18px; }
.hscroll { flex: 1; min-width: 0; background: #383838; border: 2px solid #2a2a2a; border-width: 0 2px 2px; display: flex; align-items: center; padding: 0 10px; position: relative; }
.hscroll .tri-l, .hscroll .tri-r { width: 10px; height: 24px; }
.hthumb { width: 30px; height: 30px; background: #a3a3a3; margin-left: 526px; margin-right: auto; }
.sb-corner { width: 31px; flex: none; }

/* docks */
.docks { width: 641px; flex: none; margin-left: 6px; display: flex; flex-direction: column; }
.docks-strip { height: 23px; background: #303030; display: flex; align-items: center; flex: none; }
.cl-a { margin-left: 52px; }
.cl-b { margin-left: 471px; }
.cl-c { margin-left: 67px; }
.docks-body { flex: 1; min-height: 0; display: flex; gap: 5px; }
.dock { width: 75px; flex: none; display: flex; flex-direction: column; }
.dgroup { background: #4a4a4a; padding: 7px 0 5px; border-bottom: 2px solid #2a2a2a; flex: none; }
.dgroup .grip { margin-left: 18px; }
.dgroup .grip + .dicon { margin-top: 5px; }
.dicon { height: 55px; display: flex; align-items: center; justify-content: center; padding-left: 3px; }
.dicon svg { width: 36px; height: 36px; display: block; overflow: visible; }
.dfill { flex: 1; background: #4a4a4a; }
.script-a { font-family: "Liberation Serif", serif; font-style: italic; font-size: 42px; fill: #bbb; }
.gly { color: #bbb; line-height: 1; font-family: "Liberation Sans", sans-serif; }
.g-a { font-size: 44px; border-right: 2px solid #bbb; padding-right: 1px; line-height: 36px; }
.g-p { font-size: 36px; font-weight: 700; }
.g-o { font-family: "Liberation Serif", serif; font-style: italic; font-weight: 700; font-size: 46px; }
.g-c { font-size: 44px; font-family: "DejaVu Sans", sans-serif; }

.layers { width: 481px; flex: none; background: #484848; display: flex; flex-direction: column; }
.l-tabs { height: 34px; background: #303030; display: flex; font-size: 20.500px; font-weight: 700; border-bottom: 2px solid #2a2a2a; flex: none; }
.l-tab { display: flex; align-items: center; padding: 0 14px; color: #a2a2a2; border-right: 2px solid #252525; white-space: nowrap; }
.l-tab:nth-child(2) { width: 180px; }
.l-tab.on { width: 101px; background: #484848; color: #e2e2e2; margin-bottom: -2px; }
.l-menu { width: 28px; height: 22px; margin: 6px 8px 0 auto; }
.l-list { flex: 1; min-height: 0; margin: 14px 11px 0; border: 2px solid #333; }
.l-row { height: 40px; background: #5a6474; display: flex; align-items: center; position: relative; box-shadow: 0 2px 0 #333; }
.l-eye { width: 40px; height: 38px; border-right: 2px solid #333; display: flex; align-items: center; justify-content: center; }
.l-eye svg { width: 26px; height: 20px; display: block; }
.l-lock { width: 40px; height: 38px; border-right: 2px solid #333; flex: none; }
.l-color { width: 12px; height: 38px; padding: 2px 2px; margin-left: 2px; border-right: 2px solid #333; flex: none; }
.l-color i { width: 6px; height: 34px; background: #4f7fe6; }
.l-exp { width: 12px; height: 18px; margin-left: 12px; background: #ddd; }
.l-thumb { width: 36px; height: 36px; margin-left: 20px; flex: none; display: block; }
.l-name { margin-left: 10px; width: 203px; font-size: 21px; color: #e0e0e0; flex: none; }
.l-target { width: 70px; height: 38px; border-left: 2px solid #333; display: flex; align-items: center; padding-left: 10px; flex: none; }
.l-target i { width: 17px; height: 20px; border: 2px solid #ddd; border-radius: 50%; box-shadow: 0 -2px 0 #222; }
.l-corner { position: absolute; right: 0; top: 0; width: 10px; height: 10px; background: #ddd; clip-path: polygon(0 0, 100% 0, 100% 100%); }
.l-foot { height: 38px; flex: none; display: flex; align-items: center; padding-left: 11px; font-size: 20px; }
.l-count { width: 180px; white-space: nowrap; }
.l-actions { display: flex; align-items: center; }
.l-actions svg { display: block; flex: none; height: 30px; }
.lf-a { width: 26px; margin-left: 6px; }
.lf-b { width: 26px; margin-left: 20px; }
.lf-c { width: 28px; margin-left: 20px; }
.lf-d { width: 22px; margin-left: 24px; }
.lf-e { width: 24px; margin-left: 28px; }
```
